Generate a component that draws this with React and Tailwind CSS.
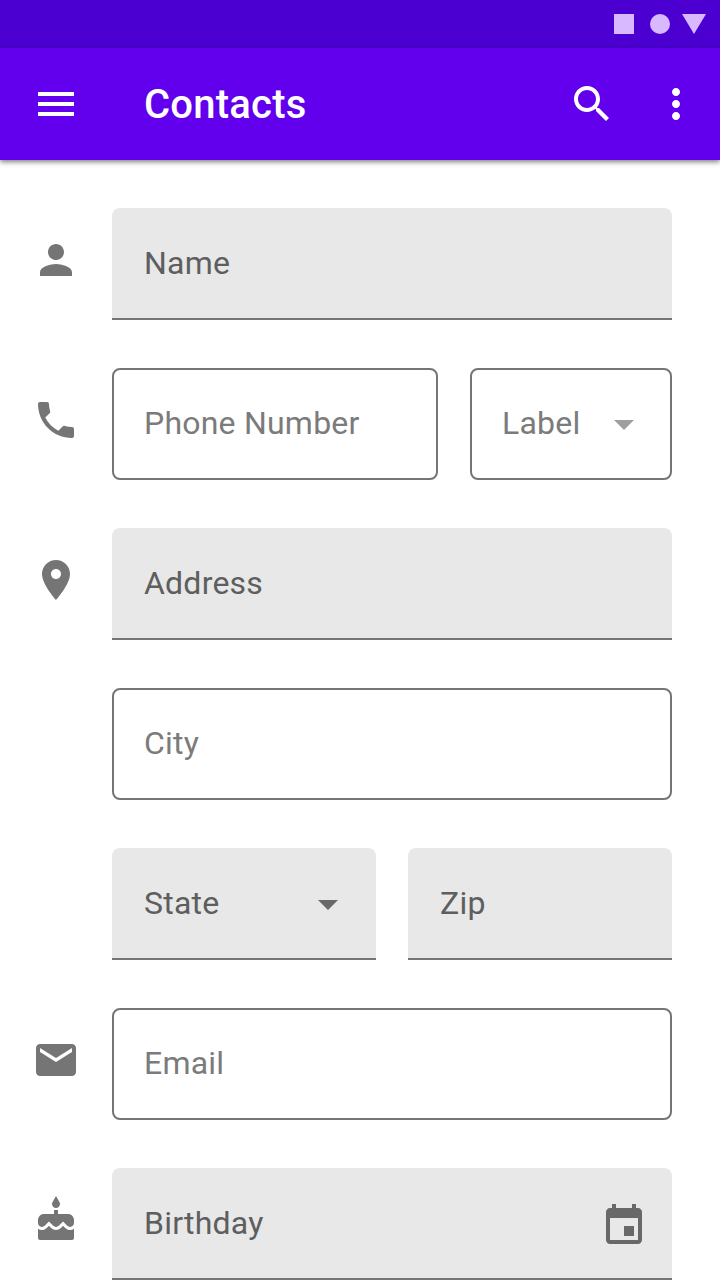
import React from "react";

const ICONS = {
  menu: "M3 18h18v-2H3v2zm0-5h18v-2H3v2zm0-7v2h18V6H3z",
  search:
    "M15.5 14h-.79l-.28-.27C15.41 12.59 16 11.11 16 9.5 16 5.91 13.09 3 9.5 3S3 5.91 3 9.5 5.91 16 9.5 16c1.61 0 3.09-.59 4.23-1.57l.27.28v.79l5 4.99L20.49 19l-4.99-5zm-6 0C7.01 14 5 11.99 5 9.5S7.01 5 9.5 5 14 7.01 14 9.5 11.99 14 9.5 14z",
  more: "M12 8c1.1 0 2-.9 2-2s-.9-2-2-2-2 .9-2 2 .9 2 2 2zm0 2c-1.1 0-2 .9-2 2s.9 2 2 2 2-.9 2-2-.9-2-2-2zm0 6c-1.1 0-2 .9-2 2s.9 2 2 2 2-.9 2-2-.9-2-2-2z",
  person:
    "M12 12c2.21 0 4-1.79 4-4s-1.79-4-4-4-4 1.79-4 4 1.79 4 4 4zm0 2c-2.67 0-8 1.34-8 4v2h16v-2c0-2.66-5.33-4-8-4z",
  phone:
    "M6.62 10.79c1.44 2.83 3.76 5.14 6.59 6.59l2.2-2.2c.27-.27.67-.36 1.02-.24 1.12.37 2.33.57 3.57.57.55 0 1 .45 1 1V20c0 .55-.45 1-1 1-9.39 0-17-7.61-17-17 0-.55.45-1 1-1h3.5c.55 0 1 .45 1 1 0 1.25.2 2.45.57 3.57.11.35.03.74-.25 1.02l-2.2 2.2z",
  place:
    "M12 2C8.13 2 5 5.13 5 9c0 5.25 7 13 7 13s7-7.75 7-13c0-3.87-3.13-7-7-7zm0 9.5c-1.38 0-2.5-1.12-2.5-2.5s1.12-2.5 2.5-2.5 2.5 1.12 2.5 2.5-1.12 2.5-2.5 2.5z",
  mail: "M20 4H4c-1.1 0-1.99.9-1.99 2L2 18c0 1.1.9 2 2 2h16c1.1 0 2-.9 2-2V6c0-1.1-.9-2-2-2zm0 4l-8 5-8-5V6l8 5 8-5v2z",
  cake: "M12 6c1.11 0 2-.9 2-2 0-.38-.1-.73-.29-1.03L12 0l-1.71 2.97c-.19.3-.29.65-.29 1.03 0 1.1.9 2 2 2zm4.6 9.99l-1.07-1.07-1.08 1.07c-1.3 1.3-3.58 1.31-4.89 0l-1.07-1.07-1.09 1.07C6.75 16.64 5.88 17 4.96 17c-.73 0-1.4-.23-1.96-.61V21c0 .55.45 1 1 1h16c.55 0 1-.45 1-1v-4.61c-.56.38-1.23.61-1.96.61-.92 0-1.79-.36-2.44-1.01zM18 9h-5V7h-2v2H6c-1.66 0-3 1.34-3 3v1.54c0 1.08.88 1.96 1.96 1.96.52 0 1.02-.2 1.38-.57l2.14-2.13 2.13 2.13c.74.74 2.03.74 2.77 0l2.14-2.13 2.13 2.13c.37.37.86.57 1.38.57 1.08 0 1.96-.88 1.96-1.96V12C21 10.34 19.66 9 18 9z",
  event:
    "M17 12h-5v5h5v-5zM16 1v2H8V1H6v2H5c-1.11 0-1.99.9-1.99 2L3 19c0 1.1.89 2 2 2h14c1.1 0 2-.9 2-2V5c0-1.1-.9-2-2-2h-1V1h-2zm3 18H5V8h14v11z",
  dropdown: "M7 10l5 5 5-5z",
};

function Icon({ name, className = "" }) {
  return (
    <svg viewBox="0 0 24 24" fill="currentColor" className={`size-12 shrink-0 ${className}`} aria-hidden="true">
      <path d={ICONS[name]} />
    </svg>
  );
}

function Field({ label, filled = false, className = "flex-1", children }) {
  const look = filled
    ? "rounded-t-[8px] border-b-2 border-[#757575] bg-[#e8e8e8] pl-8 pr-6 pt-0.5 text-[#5e5e5e]"
    : "rounded-[8px] border-2 border-[#757575] bg-white pl-[30px] pr-[22px] text-[#7b7b7b]";
  return (
    <div className={`flex h-28 items-center justify-between ${look} ${className}`}>
      <span className="relative -top-px whitespace-nowrap text-[32px] leading-[40px] tracking-[0.22px]">{label}</span>
      {children}
    </div>
  );
}

function Row({ icon, children }) {
  return (
    <div className="flex h-28 shrink-0 gap-8">
      <div className="w-12 pt-7 text-[#757575]">{icon && <Icon name={icon} />}</div>
      <div className="flex flex-1 gap-8">{children}</div>
    </div>
  );
}

export default function App() {
  return (
    <div className="flex h-[1280px] w-[720px] flex-col overflow-hidden bg-white font-['Roboto',sans-serif]">
      <div className="flex h-12 shrink-0 items-center justify-end bg-[#4b00d1] pr-3.5 text-[#d8b9ff]">
        <div className="mr-4 size-5 bg-current" />
        <div className="mr-3 size-5 rounded-full bg-current" />
        <svg viewBox="0 0 24 20" className="h-5 w-6" fill="currentColor" aria-hidden="true">
          <path d="M0 0h24L12 20z" />
        </svg>
      </div>
      <header className="flex h-28 shrink-0 items-center bg-[#6200ee] pl-8 pr-5 text-white shadow-[0_2px_5px_rgba(0,0,0,0.5)]">
        <Icon name="menu" />
        <h1 className="ml-16 flex-1 pt-0.5 text-[40px] leading-[48px] font-medium tracking-[0.22px]">Contacts</h1>
        <Icon name="search" />
        <Icon name="more" className="ml-9" />
      </header>
      <main className="flex flex-col gap-12 pl-8 pr-12 pt-12">
        <Row icon="person">
          <Field label="Name" filled />
        </Row>
        <Row icon="phone">
          <Field label="Phone Number" />
          <Field label="Label" className="w-[202px]">
            <Icon name="dropdown" className="text-[#9e9e9e]" />
          </Field>
        </Row>
        <Row icon="place">
          <Field label="Address" filled />
        </Row>
        <Row>
          <Field label="City" />
        </Row>
        <Row>
          <Field label="State" filled>
            <Icon name="dropdown" className="text-[#686868]" />
          </Field>
          <Field label="Zip" filled />
        </Row>
        <Row icon="mail">
          <Field label="Email" />
        </Row>
        <Row icon="cake">
          <Field label="Birthday" filled>
            <Icon name="event" className="mt-1 text-[#686868]" />
          </Field>
        </Row>
      </main>
    </div>
  );
}
